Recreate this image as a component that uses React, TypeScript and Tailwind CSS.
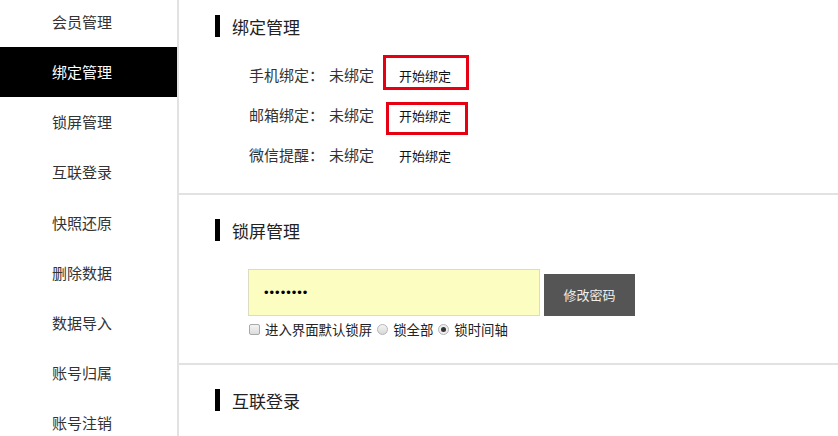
import React from 'react'

const menu = ['会员管理', '绑定管理', '锁屏管理', '互联登录', '快照还原', '删除数据', '数据导入', '账号归属', '账号注销']

const bindings = [
  { label: '手机绑定：', box: 'a' },
  { label: '邮箱绑定：', box: 'b' },
  { label: '微信提醒：', box: '' },
]

function Heading({ title }: { title: string }) {
  return (
    <div className="flex items-center gap-3 pl-[36px]">
      <span className="w-[5px] h-[22px] bg-black" />
      <span className="text-[17px] text-[#222] leading-none">{title}</span>
    </div>
  )
}

export default function App() {
  return (
    <div
      className="flex w-[838px] h-[436px] overflow-hidden bg-white text-[#333]"
      style={{ fontFamily: '"Noto Sans CJK SC", "Microsoft YaHei", sans-serif' }}
    >
      <aside className="w-[177px] shrink-0 -mt-[3px]">
        {menu.map(m => (
          <div
            key={m}
            className={`h-[50.2px] flex items-center pl-[52px] text-[15px] ${
              m === '绑定管理' ? 'bg-black text-white' : 'text-[#333]'
            }`}
          >
            {m}
          </div>
        ))}
      </aside>
      <div className="w-[2px] shrink-0 bg-[#e2e2e2]" />

      <main className="flex-1 min-w-0">
        {/* 绑定管理 */}
        <section className="pt-[15px] pb-[18px] border-b-2 border-[#e2e2e2]">
          <Heading title="绑定管理" />
          <div className="mt-[18px] pl-[70px]">
            {bindings.map(b => (
              <div key={b.label} className="h-[40px] flex items-center">
                <span className="w-[80px] text-[15px]">{b.label}</span>
                <span className="w-[70px] text-[15px]">未绑定</span>
                <span className="relative inline-block h-[13px] leading-[13px] text-[13px] text-[#111] cursor-pointer">
                  开始绑定
                  {b.box === 'a' && (
                    <span className="absolute -left-[16px] -right-[18px] -top-[14px] -bottom-[8px] border-[3px] border-[#e60012]" />
                  )}
                  {b.box === 'b' && (
                    <span className="absolute -left-[13px] -right-[17px] -top-[7px] -bottom-[13px] border-[3px] border-[#e60012]" />
                  )}
                </span>
              </div>
            ))}
          </div>
        </section>

        {/* 锁屏管理 */}
        <section className="pt-[24px] pb-[24px] border-b-2 border-[#e2e2e2]">
          <Heading title="锁屏管理" />
          <div className="mt-[28px] pl-[69px]">
            <div className="flex items-end gap-[4px]">
              <div
                className="w-[292px] h-[47px] bg-[#fcfdc1] border border-[#dcdcc0] flex items-center pl-[15px] text-[13px] tracking-[1px] text-black"
                style={{ fontFamily: '"Liberation Sans", Arial, sans-serif' }}
              >
                ••••••••
              </div>
              <button className="w-[91px] h-[42px] bg-[#555555] text-[#eeeeee] text-[13px]">修改密码</button>
            </div>
            <div className="mt-[3px] flex items-center text-[13.4px] text-[#222]">
              <span className="w-[11px] h-[11px] border border-[#a9a9a9] bg-gradient-to-b from-[#f4f4f4] to-[#dcdcdc] rounded-[2px] mr-[5px] ml-[1px]" />
              <span>进入界面默认锁屏</span>
              <span className="w-[11px] h-[11px] rounded-full border border-[#b5b5b5] bg-gradient-to-b from-[#f4f4f4] to-[#d8d8d8] mx-[5px]" />
              <span>锁全部</span>
              <span className="w-[11px] h-[11px] rounded-full border border-[#b5b5b5] bg-[#eeeeee] mx-[5px] flex items-center justify-center">
                <span className="w-[5px] h-[5px] rounded-full bg-[#333]" />
              </span>
              <span>锁时间轴</span>
            </div>
          </div>
        </section>

        {/* 互联登录 */}
        <section className="pt-[24px]">
          <Heading title="互联登录" />
        </section>
      </main>
    </div>
  )
}
